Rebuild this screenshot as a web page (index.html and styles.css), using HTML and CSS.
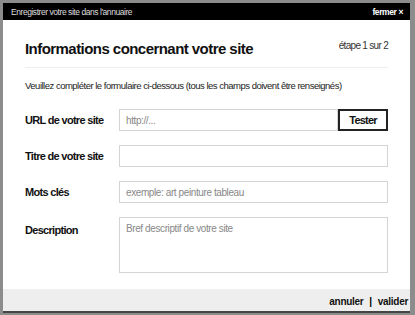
FILE: index.html
```html
<!DOCTYPE html>
<html lang="fr">
<head>
    <meta charset="utf-8">
    <title>Annuaire</title>
    <link rel="stylesheet" href="styles.css">
</head>
<body>
    <div class="modal">
      <div class="modal-header">
        <span>Enregistrer votre site dans l'annuaire</span>
        <a class="close" href="#">fermer &times;</a>
      </div>

      <div class="modal-body">
        <div class="title-row">
          <h1>Informations concernant votre site</h1>
          <span class="step">étape 1 sur 2</span>
        </div>

        <p class="intro">Veuillez compléter le formulaire ci-dessous (tous les champs doivent être renseignés)</p>

        <form class="site-form">
          <div class="field">
            <label for="url">URL de votre site</label>
            <div class="url-group">
              <input type="text" id="url" placeholder="http://...">
              <button type="button">Tester</button>
            </div>
          </div>
          <div class="field">
            <label for="titre">Titre de votre site</label>
            <input type="text" id="titre">
          </div>
          <div class="field">
            <label for="mots">Mots clés</label>
            <input type="text" id="mots" placeholder="exemple: art peinture tableau">
          </div>
          <div class="field field-top">
            <label for="desc">Description</label>
            <textarea id="desc" placeholder="Bref descriptif de votre site"></textarea>
          </div>
        </form>
      </div>

      <div class="modal-footer">
        <a href="#">annuler</a>
        <span class="sep">|</span>
        <a href="#">valider</a>
      </div>
    </div>
</body>
</html>
```
FILE: styles.css
```css
html, body {
  margin: 0;
  height: 100%;
}

body {
  background-color: #8c8c8c;
  padding: 3px 5px 2px 3px;
  box-sizing: border-box;
  font-family: "Liberation Sans", Arial, sans-serif;
}

.modal {
  background-color: white;
  height: 100%;
  display: flex;
  flex-direction: column;
}

.modal-header {
  background-color: #000;
  color: #ddd;
  font-size: 8.5px;
  letter-spacing: -0.45px;
  height: 17px;
  flex-shrink: 0;
  display: flex;
  align-items: center;
  justify-content: space-between;
  padding: 0 7px 0 8px;
}

.close {
  color: white;
  font-weight: bold;
  text-decoration: none;
  letter-spacing: -0.4px;
}

.modal-body {
  flex: 1;
  padding: 0 22px;
}

.title-row {
  display: flex;
  justify-content: space-between;
  align-items: flex-start;
  padding: 20px 0 9px;
  border-bottom: 1px solid #eee;
}

h1 {
  margin: 0;
  font-size: 15px;
  line-height: 18px;
  letter-spacing: -0.55px;
  color: #111;
}

.step {
  font-size: 10px;
  letter-spacing: -0.7px;
  color: #333;
}

.intro {
  font-size: 9.5px;
  line-height: 11px;
  letter-spacing: -0.5px;
  color: #222;
  margin: 12px 0 18px;
  white-space: nowrap;
}

.field {
  display: flex;
  align-items: center;
  margin-bottom: 14px;
}

.field-top {
  align-items: flex-start;
}

.field-top label {
  margin-top: 7px;
}

label {
  width: 94px;
  flex-shrink: 0;
  font-size: 11px;
  font-weight: bold;
  letter-spacing: -0.7px;
  white-space: nowrap;
  color: #111;
}

input[type="text"], textarea {
  flex: 1;
  min-width: 0;
  height: 22px;
  border: 1px solid #d4d4d4;
  padding: 0 6px;
  font-family: inherit;
  font-size: 10px;
  letter-spacing: -0.4px;
  box-sizing: border-box;
  color: #333;
}

input::placeholder, textarea::placeholder {
  color: #888;
}

.url-group {
  flex: 1;
  display: flex;
}

button {
  width: 50px;
  height: 22px;
  flex-shrink: 0;
  background-color: white;
  border: 2px solid #222;
  font-family: inherit;
  font-size: 11px;
  font-weight: bold;
  letter-spacing: -0.8px;
  color: #111;
}

textarea {
  height: 56px;
  padding-top: 5px;
  resize: none;
}

.modal-footer {
  background-color: #eee;
  height: 24px;
  flex-shrink: 0;
  box-sizing: border-box;
  border-bottom: 2px solid #444;
  display: flex;
  justify-content: flex-end;
  align-items: center;
  gap: 6px;
  padding: 2px 2px 0 0;
  font-size: 10px;
  font-weight: bold;
  letter-spacing: -0.3px;
}

.modal-footer a {
  color: #111;
  text-decoration: none;
}
```
